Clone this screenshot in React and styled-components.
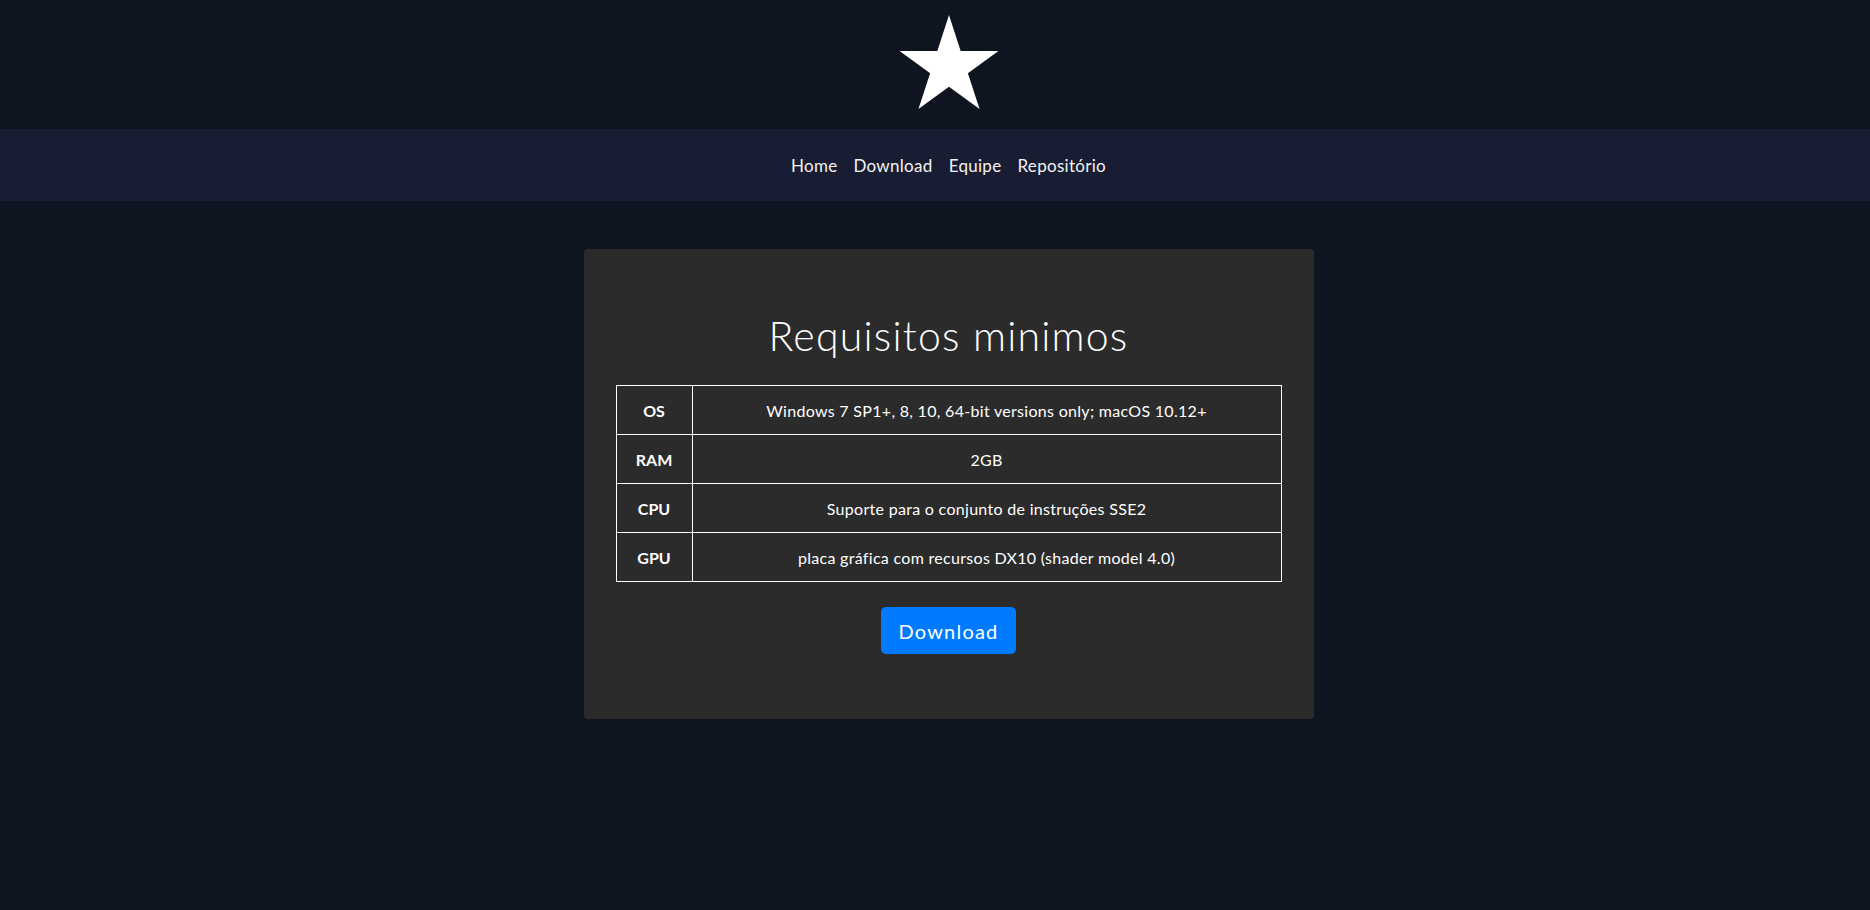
import React from 'react';
import styled, { createGlobalStyle } from 'styled-components';

const GlobalStyle = createGlobalStyle`
  html, body {
    margin: 0;
    padding: 0;
    background: #0e1420;
    font-family: Lato, "Liberation Sans", sans-serif;
    color: #fff;
  }
`;

// content in the capture sits ~14px right of the viewport centre
const Page = styled.div`
  background: #0e1420;
  display: flex;
  flex-direction: column;
`;

const Header = styled.header`
  height: 129px;
  box-sizing: border-box;
  padding: 15px 0 0 27px;
  display: flex;
  justify-content: center;
  align-items: flex-start;
`;

const Nav = styled.nav`
  height: 72px;
  padding-left: 27px;
  background: #191d33;
  display: flex;
  justify-content: center;
  align-items: center;
  gap: 16px;
`;

const NavLink = styled.a`
  color: #f2f2f2;
  font-size: 17px;
  text-decoration: none;
  letter-spacing: 0.3px;
  cursor: pointer;
`;

const Main = styled.main`
  display: flex;
  justify-content: center;
  padding: 48px 0 0 27px;
`;

const Card = styled.section`
  width: 730px;
  box-sizing: border-box;
  background: #2b2b2b;
  border-radius: 4px;
  padding: 63px 32px 65px;
  display: flex;
  flex-direction: column;
  align-items: center;
`;

const Title = styled.h1`
  margin: 0 0 25px;
  font-size: 41px;
  line-height: 48px;
  font-weight: 300;
  letter-spacing: 1.2px;
  color: #fff;
`;

const Table = styled.table`
  width: 100%;
  border-collapse: collapse;
  font-size: 16px;
  color: #fff;
`;

const Cell = styled.td`
  border: 1px solid #fff;
  padding: 0 12px;
  height: 48px;
  text-align: center;
  letter-spacing: ${p => (p.$head ? '0' : '0.3px')};
  font-weight: ${p => (p.$head ? 700 : 400)};
  width: ${p => (p.$head ? '51px' : 'auto')};
`;

const Button = styled.button`
  margin-top: 25px;
  height: 47px;
  padding: 0 18px;
  background: #007bff;
  color: #fff;
  border: none;
  border-radius: 5px;
  font-family: Lato, "Liberation Sans", sans-serif;
  font-size: 20px;
  letter-spacing: 1.2px;
  cursor: pointer;
`;

const Star = () => (
  <svg width="100" height="95" viewBox="0 0 100 95">
    <polygon
      fill="#fff"
      points="50,0 61.67,35.93 99.45,35.93 68.89,58.14 80.56,94.07 50,71.86 19.44,94.07 31.11,58.14 0.55,35.93 38.33,35.93"
    />
  </svg>
);

const requisitos = [
  ['OS', 'Windows 7 SP1+, 8, 10, 64-bit versions only; macOS 10.12+'],
  ['RAM', '2GB'],
  ['CPU', 'Suporte para o conjunto de instruções SSE2'],
  ['GPU', 'placa gráfica com recursos DX10 (shader model 4.0)'],
];

export default function App() {
  return (
    <Page>
      <GlobalStyle />
      <Header>
        <Star />
      </Header>
      <Nav>
        <NavLink>Home</NavLink>
        <NavLink>Download</NavLink>
        <NavLink>Equipe</NavLink>
        <NavLink>Repositório</NavLink>
      </Nav>
      <Main>
        <Card>
          <Title>Requisitos minimos</Title>
          <Table>
            <tbody>
              {requisitos.map(([k, v]) => (
                <tr key={k}>
                  <Cell $head>{k}</Cell>
                  <Cell>{v}</Cell>
                </tr>
              ))}
            </tbody>
          </Table>
          <Button>Download</Button>
        </Card>
      </Main>
    </Page>
  );
}
